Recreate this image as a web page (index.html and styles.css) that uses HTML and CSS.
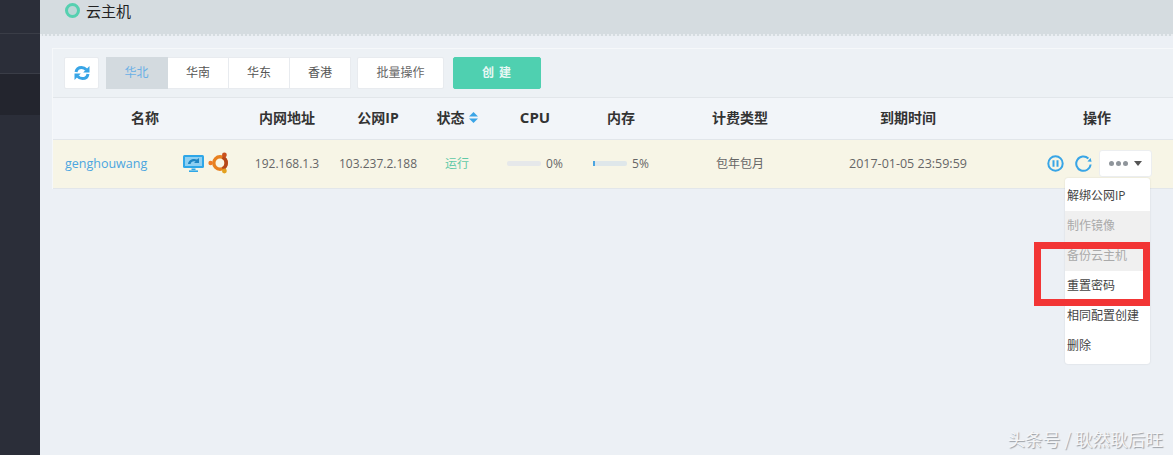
FILE: index.html
```html
<!DOCTYPE html>
<html lang="zh-CN">
<head>
    <meta charset="UTF-8">
    <title>云主机</title>
    <link rel="stylesheet" href="styles.css">
</head>
<body>
    <!-- Sidebar -->
    <aside class="sidebar">
        <div class="side-item"></div>
        <div class="side-item"></div>
        <div class="side-item active"></div>
    </aside>

    <main class="main">
        <header class="page-head">
            <span class="head-dot"></span>
            <span class="head-title">云主机</span>
        </header>

        <section class="panel">
            <div class="toolbar">
                <button class="btn btn-refresh" aria-label="刷新">
                    <svg width="16" height="16" viewBox="0 0 16 16" fill="none" stroke="#38a5e6" stroke-width="3">
                        <path d="M2 7 C2.6 3.6 5 2.4 7.6 2.4 C9.6 2.4 11 3.2 12.4 4.8"/>
                        <path d="M14 9 C13.4 12.4 11 13.6 8.4 13.6 C6.4 13.6 5 12.8 3.6 11.2"/>
                        <path d="M15.5 1 V7.5 H9.2 Z" fill="#38a5e6" stroke="none"/>
                        <path d="M0.5 15 V8.5 H6.8 Z" fill="#38a5e6" stroke="none"/>
                    </svg>
                </button>
                <div class="tabs">
                    <a class="tab current">华北</a>
                    <a class="tab">华南</a>
                    <a class="tab">华东</a>
                    <a class="tab">香港</a>
                </div>
                <button class="btn btn-batch">批量操作</button>
                <button class="btn btn-create">创 建</button>
            </div>

            <div class="cols thead">
                <div>名称</div>
                <div>内网地址</div>
                <div>公网IP</div>
                <div class="sort-cell">状态
                    <svg class="sort" width="9" height="11" viewBox="0 0 9 11" fill="#3ba4e6"><path d="M4.5 0 L9 4.6 H0 Z"/><path d="M4.5 11 L0 6.4 H9 Z"/></svg>
                </div>
                <div class="latin-head">CPU</div>
                <div>内存</div>
                <div>计费类型</div>
                <div>到期时间</div>
                <div class="op-head">操作</div>
            </div>

            <div class="cols trow">
                <div class="name-cell">
                    <a class="host-name">genghouwang</a>
                    <svg class="icon-monitor" width="21" height="17" viewBox="0 0 21 17">
                        <rect x="0" y="0" width="21" height="13" rx="1.5" fill="#2ea7e8"/>
                        <rect x="2" y="2" width="17" height="9" fill="#8fd0f2"/>
                        <path d="M5 9 C5.5 5 10 3 14 4.6 L16 3 V8 H11 L12.6 6.6 C10.2 5.8 8 6.8 7.6 9 Z" fill="#1f86c4"/>
                        <rect x="8.5" y="13.5" width="4" height="1.6" fill="#2ea7e8"/>
                        <rect x="6" y="15.4" width="9" height="1.6" fill="#2ea7e8"/>
                    </svg>
                    <svg class="icon-ubuntu" width="22" height="22" viewBox="0 0 22 22" fill="none">
                        <circle cx="12" cy="11" r="6.2" stroke="#e8801f" stroke-width="3.4"/>
                        <path d="M14.5 5.3 A6.2 6.2 0 0 1 14.5 16.7" stroke="#b5471b" stroke-width="3.4"/>
                        <path d="M12 11 L4 11 M12 11 L16.5 3.2 M12 11 L16.5 18.8" stroke="#f7f5e6" stroke-width="0"/>
                        <circle cx="2.6" cy="11" r="2.2" fill="#ee7a26"/>
                        <circle cx="16.4" cy="3" r="2.4" fill="#c9501d"/>
                        <circle cx="16.4" cy="19" r="2.4" fill="#e3a11f"/>
                    </svg>
                </div>
                <div>192.168.1.3</div>
                <div>103.237.2.188</div>
                <div class="status">运行</div>
                <div class="usage"><span class="bar"></span><span>0%</span></div>
                <div class="usage"><span class="bar mem"><i class="bar-fill" style="width:5%"></i></span><span>5%</span></div>
                <div>包年包月</div>
                <div class="date-cell">2017-01-05 23:59:59</div>
                <div class="op-cell">
                    <svg width="17" height="17" viewBox="0 0 17 17" fill="none" stroke="#38a5e6" stroke-width="2">
                        <circle cx="8.5" cy="8.5" r="7.2"/>
                        <path d="M6.5 5.2 V11.8 M10.5 5.2 V11.8"/>
                    </svg>
                    <svg class="op-restart" width="17" height="17" viewBox="0 0 17 17" fill="none" stroke="#38a5e6" stroke-width="2">
                        <path d="M13.4 3.4 A7.2 7.2 0 1 0 15.6 9.5"/>
                        <path d="M12.4 6.4 L16.6 6.8 L15.6 3 Z" fill="#38a5e6" stroke="none"/>
                    </svg>
                    <div class="more">
                        <span class="dots"><i></i><i></i><i></i></span>
                        <span class="caret"></span>
                    </div>
                    <ul class="menu">
                        <li>解绑公网IP</li>
                        <li class="disabled">制作镜像</li>
                        <li class="disabled">备份云主机</li>
                        <li>重置密码</li>
                        <li>相同配置创建</li>
                        <li>删除</li>
                    </ul>
                </div>
            </div>
        </section>

        <div class="red-box"></div>
        <div class="watermark">头条号 / 耿然耿后旺</div>
    </main>
</body>
</html>
```

FILE: styles.css
```css
* {
    margin: 0;
    padding: 0;
    box-sizing: border-box;
}

html, body {
    height: 455px;
    overflow: hidden;
}

body {
    display: flex;
    font-family: "Open Sans", "Noto Sans CJK SC", sans-serif;
    font-size: 12px;
    color: #555;
    background-color: #ecf0f5;
}

/* Sidebar */
.sidebar {
    width: 40px;
    flex-shrink: 0;
    background-color: #2b2e39;
}

.side-item {
    height: 34px;
    border-bottom: 1px solid #3a3d47;
}

.side-item + .side-item {
    height: 40px;
}

.side-item.active {
    height: 41px;
    background-color: #23252e;
    border-bottom: 0;
}

/* Main */
.main {
    position: relative;
    flex: 1;
    min-width: 0;
}

.page-head {
    display: flex;
    align-items: center;
    gap: 6px;
    height: 36px;
    padding: 0 0 13px 25px;
    background-color: #d5dce0;
    border-bottom: 2px dotted #e9edf1;
}

.head-dot {
    width: 15px;
    height: 15px;
    border: 3px solid #55d0b0;
    border-radius: 50%;
    background-color: #bcd6d6;
}

.head-title {
    font-size: 15px;
    color: #222;
}

.panel {
    margin: 12px 0 0 12px;
    border-top: 1px solid #f6f8fa;
    border-left: 1px solid #f6f8fa;
}

.toolbar {
    display: flex;
    align-items: center;
    height: 49px;
    padding: 8px 0 8px 11px;
    background-color: #edf1f5;
    border-bottom: 1px solid #e2e6ea;
}

.btn {
    height: 32px;
    padding-bottom: 2px;
    border: 1px solid #e8ebef;
    border-radius: 2px;
    background-color: #fff;
    font-family: inherit;
    font-size: 12px;
    color: #666;
}

.btn-refresh {
    display: flex;
    align-items: center;
    justify-content: center;
    width: 35px;
    padding-bottom: 0;
}

.tabs {
    display: flex;
    margin-left: 7px;
    margin-right: 6px;
}

.tab {
    display: flex;
    align-items: center;
    justify-content: center;
    width: 61px;
    height: 32px;
    padding-bottom: 2px;
    background-color: #fff;
    border-right: 1px solid #e8ebef;
    border-top: 1px solid #e8ebef;
    border-bottom: 1px solid #e8ebef;
    color: #555;
}

.tab.current {
    width: 62px;
    background-color: #d3dadf;
    border-color: #d3dadf;
    color: #6ab0e6;
}

.btn-batch {
    width: 87px;
    margin-right: 9px;
}

.btn-create {
    width: 88px;
    background-color: #4fd0b0;
    border-color: #4fd0b0;
    color: #e8f8f4;
    font-weight: 700;
    letter-spacing: 1px;
}

/* Table */
.cols {
    display: grid;
    grid-template-columns: 184px 100px 82px 76px 80px 92px 146px 190px 1fr;
    align-items: center;
    text-align: center;
}

.thead {
    height: 42px;
    padding-bottom: 3px;
    background-color: #f2f5f9;
    border-bottom: 1px solid #e2e6ea;
    font-size: 14px;
    font-weight: 700;
    color: #333;
}

.latin-head {
    font-size: 15px;
}

.sort-cell {
    display: flex;
    align-items: center;
    justify-content: center;
    gap: 4px;
}

.op-head {
    padding-left: 18px;
}

.trow {
    height: 49px;
    padding-bottom: 2px;
    background-color: #f7f5e6;
    border-bottom: 1px solid #e2e6ea;
    color: #666;
}

.name-cell {
    display: flex;
    align-items: center;
    padding-left: 12px;
    text-align: left;
}

.host-name {
    width: 118px;
    font-size: 12.5px;
    color: #4ba5e0;
}

.icon-ubuntu {
    margin-left: 4px;
}

.date-cell {
    font-size: 12.5px;
}

.status {
    color: #5fc9a6;
}

.usage {
    display: flex;
    align-items: center;
    justify-content: center;
    gap: 5px;
}

.bar {
    display: block;
    width: 34px;
    height: 5px;
    border-radius: 2px;
    background-color: #e6e8ea;
}

.bar.mem {
    background-color: #dfe7ea;
}

.bar-fill {
    display: block;
    height: 5px;
    background-color: #4ba5e0;
}

.op-cell {
    position: relative;
    display: flex;
    align-items: center;
    padding-left: 44px;
}

.op-restart {
    margin-left: 11px;
}

.more {
    display: flex;
    align-items: center;
    gap: 6px;
    width: 53px;
    height: 27px;
    margin-left: 7px;
    padding-left: 9px;
    background-color: #fff;
    border: 1px solid #eceef0;
    border-radius: 3px;
}

.dots {
    display: flex;
    gap: 2px;
}

.dots i {
    width: 5px;
    height: 5px;
    border-radius: 50%;
    background-color: #8f959b;
}

.caret {
    border-top: 5px solid #555;
    border-left: 4px solid transparent;
    border-right: 4px solid transparent;
}

/* Dropdown */
.menu {
    position: absolute;
    top: 28px;
    left: 62px;
    width: 85px;
    padding: 3px 0;
    list-style: none;
    background-color: #fff;
    border-radius: 3px;
    box-shadow: 0 0 2px rgba(0, 0, 0, 0.12);
    text-align: left;
}

.menu li {
    height: 30px;
    padding-left: 2px;
    line-height: 30px;
    color: #444;
}

.menu li.disabled {
    background-color: #f0f0f0;
    color: #aaa;
}

/* Annotation over the screenshot */
.red-box {
    position: absolute;
    top: 242px;
    left: 994px;
    width: 116px;
    height: 64px;
    border: 7px solid #f23535;
}

.watermark {
    position: absolute;
    right: 10px;
    bottom: 4px;
    font-family: "Noto Sans CJK SC", sans-serif;
    font-size: 17.6px;
    color: #f5f6f8;
    text-shadow: 1px 1px 1px #9a9ea4;
}
```
